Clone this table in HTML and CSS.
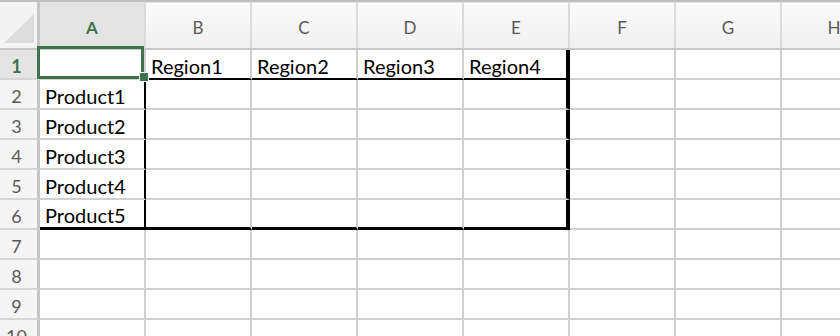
FILE: index.html
```html
<!DOCTYPE html>
<html>
    <head>
        <meta http-equiv="Content-Type" content="text/html; charset=utf-8" />
        <meta name="viewport" content="width=device-width, initial-scale=1.0">
        <link rel="stylesheet" href="styles.css">
    </head>
<body>
    <div class="sheet">
        <div class="row head">
            <div class="corner">
                <svg width="37" height="46" viewBox="0 0 37 46"><polygon points="4,41 34,41 34,12" fill="#dcdcdc"/></svg>
            </div>
            <div class="col sel">A</div>
            <div class="col">B</div>
            <div class="col">C</div>
            <div class="col">D</div>
            <div class="col">E</div>
            <div class="col">F</div>
            <div class="col">G</div>
            <div class="col">H</div>
        </div>

        <div class="row">
            <div class="rh sel">1</div>
            <div class="cell active"></div>
            <div class="cell line-b">Region1</div>
            <div class="cell line-b">Region2</div>
            <div class="cell line-b">Region3</div>
            <div class="cell line-b edge-r">Region4</div>
            <div class="cell"></div>
            <div class="cell"></div>
            <div class="cell"></div>
        </div>
        <div class="row">
            <div class="rh">2</div>
            <div class="cell line-r">Product1</div>
            <div class="cell"></div>
            <div class="cell"></div>
            <div class="cell"></div>
            <div class="cell edge-r"></div>
            <div class="cell"></div>
            <div class="cell"></div>
            <div class="cell"></div>
        </div>
        <div class="row">
            <div class="rh">3</div>
            <div class="cell line-r">Product2</div>
            <div class="cell"></div>
            <div class="cell"></div>
            <div class="cell"></div>
            <div class="cell edge-r"></div>
            <div class="cell"></div>
            <div class="cell"></div>
            <div class="cell"></div>
        </div>
        <div class="row">
            <div class="rh">4</div>
            <div class="cell line-r">Product3</div>
            <div class="cell"></div>
            <div class="cell"></div>
            <div class="cell"></div>
            <div class="cell edge-r"></div>
            <div class="cell"></div>
            <div class="cell"></div>
            <div class="cell"></div>
        </div>
        <div class="row">
            <div class="rh">5</div>
            <div class="cell line-r">Product4</div>
            <div class="cell"></div>
            <div class="cell"></div>
            <div class="cell"></div>
            <div class="cell edge-r"></div>
            <div class="cell"></div>
            <div class="cell"></div>
            <div class="cell"></div>
        </div>
        <div class="row">
            <div class="rh">6</div>
            <div class="cell line-r edge-b">Product5</div>
            <div class="cell edge-b"></div>
            <div class="cell edge-b"></div>
            <div class="cell edge-b"></div>
            <div class="cell edge-r edge-b"></div>
            <div class="cell"></div>
            <div class="cell"></div>
            <div class="cell"></div>
        </div>

        <div class="row">
            <div class="rh">7</div>
            <div class="cell"></div><div class="cell"></div><div class="cell"></div><div class="cell"></div>
            <div class="cell"></div><div class="cell"></div><div class="cell"></div><div class="cell"></div>
        </div>
        <div class="row">
            <div class="rh">8</div>
            <div class="cell"></div><div class="cell"></div><div class="cell"></div><div class="cell"></div>
            <div class="cell"></div><div class="cell"></div><div class="cell"></div><div class="cell"></div>
        </div>
        <div class="row">
            <div class="rh">9</div>
            <div class="cell"></div><div class="cell"></div><div class="cell"></div><div class="cell"></div>
            <div class="cell"></div><div class="cell"></div><div class="cell"></div><div class="cell"></div>
        </div>
        <div class="row">
            <div class="rh">10</div>
            <div class="cell"></div><div class="cell"></div><div class="cell"></div><div class="cell"></div>
            <div class="cell"></div><div class="cell"></div><div class="cell"></div><div class="cell"></div>
        </div>
    </div>
</body>
</html>
```

FILE: styles.css
```css
body{
    margin: 0;
    overflow: hidden;
    background: #fff;
    font-family: Lato, "Open Sans", sans-serif;
}
.sheet{
    width: 888px;
}
.row{
    display: grid;
    grid-template-columns: 40px repeat(8, 106px);
    height: 30px;
}

/* column letters */
.head{
    height: 50px;
    box-sizing: border-box;
    border-top: 2px solid #c0c0c0;
    border-bottom: 2px solid #c8c8c8;
    background: linear-gradient(#fafafa, #f1f1f1);
    box-shadow: inset 0 1px #e2e2e2;
}
.corner{
    border-right: 3px solid #c6c6c6;
    background: #f4f4f4;
}
.corner svg{ display: block; }
.col{
    border-right: 2px solid #dadada;
    display: flex;
    align-items: center;
    justify-content: center;
    padding-top: 4px;
    font-size: 17px;
    color: #5a5a5a;
}
.col.sel, .rh.sel{
    background: #e4e4e4;
    color: #3e724b;
    font-weight: bold;
}

/* row numbers */
.rh{
    box-sizing: border-box;
    border-right: 3px solid #c6c6c6;
    border-bottom: 2px solid #d6d6d6;
    background: #f5f5f5;
    display: flex;
    align-items: flex-end;
    justify-content: center;
    padding-right: 4px;
    font-size: 18px;
    line-height: 24px;
    color: #5a5a5a;
}

.cell{
    box-sizing: border-box;
    border-right: 2px solid #d0d0d0;
    border-bottom: 2px solid #d0d0d0;
    display: flex;
    align-items: flex-end;
    padding-left: 5px;
    font-size: 20px;
    line-height: 24px;
    color: #000;
    white-space: nowrap;
}
.line-b{ border-bottom-color: #000; }
.line-r{ border-right-color: #000; }
.edge-r{ border-right: 4px solid #000; }
.edge-b{ border-bottom: 3px solid #000; }

/* selected cell with fill handle */
.active{
    position: relative;
}
.active::after{
    content: "";
    position: absolute;
    top: -4px; left: -3px; right: 0; bottom: -1px;
    border: 3px solid #3e724b;
}
.active::before{
    content: "";
    position: absolute;
    right: -5px; bottom: -4px;
    width: 8px; height: 8px;
    background: #3e724b;
    border: 1px solid #fff;
    z-index: 1;
}
```
